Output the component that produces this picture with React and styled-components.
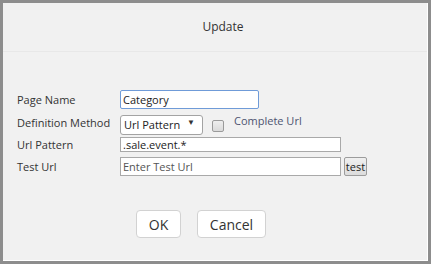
import React from 'react';
import styled, { createGlobalStyle } from 'styled-components';

const Global = createGlobalStyle`
  html, body { margin: 0; padding: 0; background: #fff; }
  body { font-family: "Open Sans", "Liberation Sans", sans-serif; }
`;

const Frame = styled.div`
  box-sizing: border-box;
  width: 431px;
  height: 264px;
  border: 3px solid #8d8d8d;
  background: #f1f1f1;
  display: flex;
  flex-direction: column;
`;

const Inner = styled.div`
  flex: 1;
  display: flex;
  flex-direction: column;
  border-right: 1px solid #fff;
  border-bottom: 1px solid #fff;
`;

const Header = styled.div`
  height: 49px;
  border-bottom: 1px solid #e8e8e8;
  display: flex;
  align-items: center;
  justify-content: center;
  padding-left: 16px;
  padding-bottom: 2px;
  box-sizing: border-box;
  font-size: 12px;
  color: #333;
`;

const Form = styled.div`
  padding: 37px 0 0 14px;
  display: flex;
  flex-direction: column;
`;

const Row = styled.div`
  display: flex;
  align-items: center;
  height: ${p => p.$h}px;
`;

const Label = styled.label`
  width: 103px;
  flex: none;
  font-size: 11px;
  color: #333;
`;

const Input = styled.input`
  box-sizing: border-box;
  width: ${p => p.$w}px;
  height: ${p => p.$h}px;
  margin: 0;
  padding: 0 2px;
  border: 1px solid ${p => (p.$focus ? '#6f9bd8' : '#a9a9a9')};
  border-radius: ${p => (p.$focus ? '2px' : '0')};
  background: #fff;
  font-family: "Open Sans", "Liberation Sans", sans-serif;
  font-size: 11px;
  color: #222;
  outline: none;
  &::placeholder { color: #555; opacity: 1; }
`;

const SelectWrap = styled.div`
  position: relative;
  width: 83px;
  height: 20px;
`;

const Select = styled.select`
  appearance: none;
  box-sizing: border-box;
  width: 100%;
  height: 100%;
  margin: 0;
  padding: 0 0 0 3px;
  border: 1px solid #a3a3a3;
  border-radius: 3px;
  background: #fff;
  font-family: "Open Sans", "Liberation Sans", sans-serif;
  font-size: 11px;
  color: #222;
`;

const Arrow = styled.span`
  position: absolute;
  right: 8px;
  top: 4px;
  font-size: 8px;
  color: #333;
  pointer-events: none;
`;

const Check = styled.span`
  box-sizing: border-box;
  width: 12px;
  height: 12px;
  margin: 8px 0 0 9px;
  border: 1px solid #9a9a9a;
  border-radius: 2px;
  background: linear-gradient(#eeeeee, #dadada);
`;

const CheckText = styled.span`
  margin: 0 0 4px 10px;
  font-size: 11px;
  color: #4d5470;
`;

const TestButton = styled.button`
  box-sizing: border-box;
  width: 23px;
  height: 19px;
  margin: 0 0 0 3px;
  padding: 0;
  border: 1px solid #9c9c9c;
  border-radius: 2px;
  background: linear-gradient(#f0f0f0, #dcdcdc);
  font-family: "Open Sans", "Liberation Sans", sans-serif;
  font-size: 11px;
  color: #222;
`;

const Actions = styled.div`
  display: flex;
  gap: 16px;
  margin: 32px 0 0 133px;
`;

const Button = styled.button`
  box-sizing: border-box;
  width: ${p => p.$w}px;
  height: 28px;
  padding: 0;
  border: 1px solid #d2d2d2;
  border-radius: 4px;
  background: #fff;
  font-family: "Open Sans", "Liberation Sans", sans-serif;
  font-size: 14px;
  color: #333;
`;

export default function App() {
  return (
    <>
      <Global />
      <Frame>
        <Inner>
          <Header>Update</Header>
          <Form>
            <Row $h={21}>
              <Label>Page Name</Label>
              <Input $w={139} $h={19} $focus defaultValue="Category" />
            </Row>
            <Row $h={24}>
              <Label>Definition Method</Label>
              <SelectWrap>
                <Select defaultValue="url">
                  <option value="url">Url Pattern</option>
                </Select>
                <Arrow>▼</Arrow>
              </SelectWrap>
              <Check />
              <CheckText>Complete Url</CheckText>
            </Row>
            <Row $h={20}>
              <Label>Url Pattern</Label>
              <Input $w={221} $h={15} defaultValue=".sale.event.*" />
            </Row>
            <Row $h={24}>
              <Label>Test Url</Label>
              <Input $w={221} $h={19} placeholder="Enter Test Url" />
              <TestButton>test</TestButton>
            </Row>
          </Form>
          <Actions>
            <Button $w={45}>OK</Button>
            <Button $w={69}>Cancel</Button>
          </Actions>
        </Inner>
      </Frame>
    </>
  );
}
